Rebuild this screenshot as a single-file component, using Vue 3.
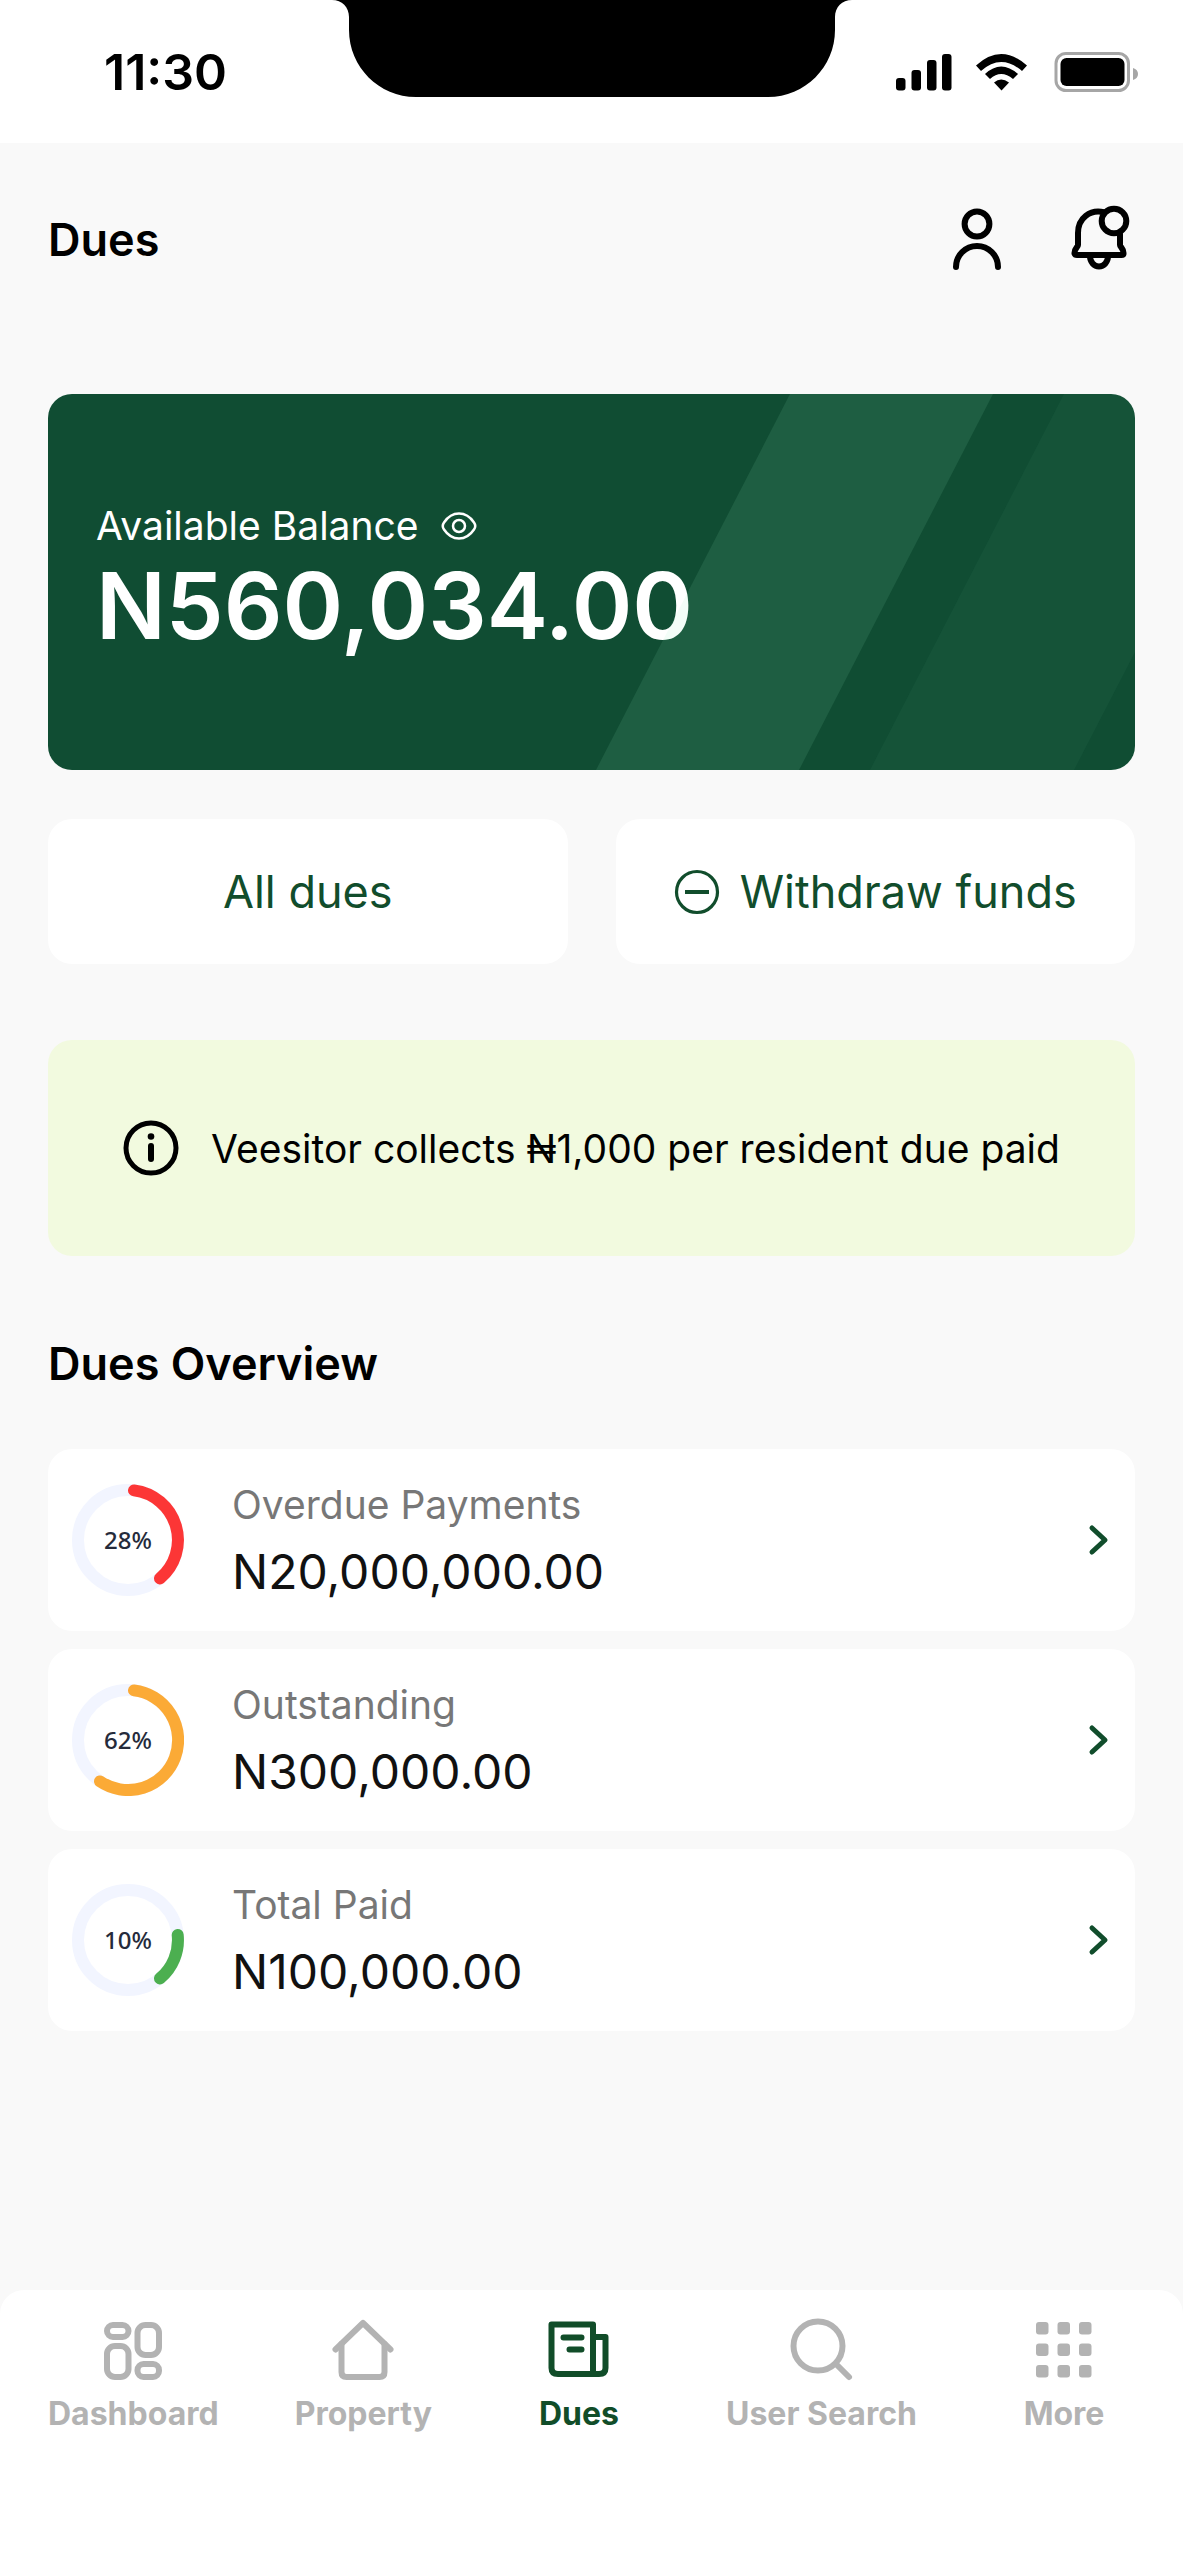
<script setup>
import { ref } from 'vue'

const showBalance = ref(true)
const active = ref('Dues')

const overview = [
  { label: 'Overdue Payments', amount: 'N20,000,000.00', pct: '28%', color: '#fc3636', arc: 'M62 6.4A50 50 0 0 1 88 94.4' },
  { label: 'Outstanding', amount: 'N300,000.00', pct: '62%', color: '#fbaa36', arc: 'M62 6.4A50 50 0 1 1 28 97.4' },
  { label: 'Total Paid', amount: 'N100,000.00', pct: '10%', color: '#4caf50', arc: 'M105.7 51A50 50 0 0 1 88 94.4' }
]

const tabs = ['Dashboard', 'Property', 'Dues', 'User Search', 'More']
const dots = [8, 29.5, 51]
</script>

<template>
  <div class="screen">
    <div class="status">
      <span class="time">11:30</span>
      <svg class="notch" width="520" height="98" viewBox="0 0 520 98" aria-hidden="true">
        <path d="M0 0H520C510 0 503 7 503 17V30C503 67 473 97 436 97H84C47 97 17 67 17 30V17C17 7 10 0 0 0Z" />
      </svg>
      <svg class="signals" width="244" height="42" viewBox="0 0 244 42" aria-hidden="true">
        <rect x="0" y="27" width="9.500" height="12.500" rx="3" />
        <rect x="15.500" y="19" width="9.500" height="20.500" rx="3" />
        <rect x="31" y="9" width="9.500" height="30.500" rx="3" />
        <rect x="46" y="3" width="9.500" height="36.500" rx="3" />
        <path d="M80 14.5Q105 -8.500 131 14.500L126 20Q105 2 85 20Z" />
        <path d="M89 23Q105 8 122 23L117 28Q105 18 94 28Z" />
        <path d="M98 31.500Q105 25.500 113 31.500L105.500 39.500Z" />
        <rect x="160" y="2.500" width="72.500" height="37" rx="10" fill="none" stroke="#a6a6a6" stroke-width="3" />
        <rect x="164.500" y="7" width="64" height="28" rx="6" />
        <path d="M237 17Q242 18.500 242 23T237 29Z" fill="#a6a6a6" />
      </svg>
    </div>

    <header class="header">
      <h1>Dues</h1>
      <div class="header-actions">
        <button type="button" aria-label="Profile">
          <svg width="72" height="72" viewBox="0 0 72 72" class="line">
            <circle cx="36" cy="20" r="12.400" />
            <path d="M15 63a21 21 0 0 1 42 0" />
          </svg>
        </button>
        <button type="button" aria-label="Notifications">
          <svg width="72" height="72" viewBox="0 0 72 72" class="line">
            <path d="M41 8.200C27 5 15 14 15 29V41C15 43 11 45 11.500 49.500Q12 51 14 51H58.500Q60.500 51 60.500 49.500C61 45 57 43 57 41V30" />
            <path d="M27 52a9 10.500 0 0 0 18 0" />
            <circle cx="51" cy="17" r="12.300" />
          </svg>
        </button>
      </div>
    </header>

    <main class="content">
      <section class="balance">
        <div class="balance-label">
          <span>Available Balance</span>
          <button type="button" aria-label="Toggle balance" @click="showBalance = !showBalance">
            <svg width="36" height="28" viewBox="0 0 36 28" fill="none" stroke="#fff" stroke-width="2.500">
              <path d="M3 10.500C11-1.500 25-1.500 33 10.500Q35.500 14 33 17.500C25 29.500 11 29.500 3 17.500Q.500 14 3 10.500Z" />
              <circle cx="18" cy="14" r="6" />
            </svg>
          </button>
        </div>
        <p class="balance-amount">{{ showBalance ? 'N560,034.00' : '••••••' }}</p>
        <svg class="stripes" viewBox="0 0 540 376" preserveAspectRatio="xMaxYMid slice" aria-hidden="true">
          <path d="M195 0H398L204 376H1Z" fill="rgba(150,235,190,.11)" />
          <path d="M469 0H540V258L479 376H275Z" fill="rgba(150,235,190,.045)" />
        </svg>
      </section>

      <div class="actions">
        <button type="button" class="action">All dues</button>
        <button type="button" class="action">
          <svg width="46" height="46" viewBox="0 0 46 46" fill="none" stroke="currentColor" stroke-width="3.200">
            <circle cx="23" cy="23" r="20.500" />
            <path d="M11 23H35" stroke-width="4" />
          </svg>
          <span>Withdraw funds</span>
        </button>
      </div>

      <p class="notice">
        <svg width="56" height="56" viewBox="0 0 56 56" aria-hidden="true">
          <circle cx="28" cy="28" r="25" fill="none" stroke="#000" stroke-width="5" />
          <circle cx="28" cy="16.500" r="3.300" />
          <path d="M28 26V39" stroke="#000" stroke-width="6" stroke-linecap="round" />
        </svg>
        <span>Veesitor collects ₦1,000 per resident due paid</span>
      </p>

      <h2>Dues Overview</h2>

      <ul class="list">
        <li v-for="item in overview" :key="item.label">
          <a href="#" class="row">
            <span class="ring">
              <svg width="112" height="112" viewBox="0 0 112 112" fill="none" stroke-width="12" aria-hidden="true">
                <circle cx="56" cy="56" r="50" stroke="#f2f5ff" />
                <path :d="item.arc" :stroke="item.color" stroke-linecap="round" />
              </svg>
              <span class="pct">{{ item.pct }}</span>
            </span>
            <span class="row-text">
              <span class="row-label">{{ item.label }}</span>
              <span class="row-amount">{{ item.amount }}</span>
            </span>
            <svg class="chevron" width="24" height="32" viewBox="0 0 24 32" aria-hidden="true">
              <path d="M5 4L18 16L5 28" />
            </svg>
          </a>
        </li>
      </ul>
    </main>

    <nav class="tabs">
      <a v-for="tab in tabs" :key="tab" href="#" class="tab" :class="{ active: tab === active }" @click.prevent="active = tab">
        <svg width="72" height="72" viewBox="0 0 72 72" class="line" aria-hidden="true">
          <template v-if="tab === 'Dashboard'">
            <rect x="10" y="11" width="21.500" height="12" rx="6" />
            <rect x="40.500" y="11" width="21.500" height="30" rx="8" />
            <rect x="10" y="32" width="21.500" height="31" rx="8" />
            <rect x="40.500" y="50" width="21.500" height="13" rx="6" />
          </template>
          <template v-else-if="tab === 'Property'">
            <path d="M8.500 35.500L36 9L63.500 35.500" />
            <path d="M14.500 30V58Q14.500 63 19.500 63H52.500Q57.500 63 57.500 58V30" />
          </template>
          <template v-else-if="tab === 'Dues'">
            <path d="M50 60H15Q8.500 60 8.500 54V10.500H50V60H56Q62.500 60 62.500 54V23H50" />
            <path d="M20.500 23.500H38.500M26.500 35.500H38.500" />
          </template>
          <template v-else-if="tab === 'User Search'">
            <circle cx="33" cy="32" r="24.500" />
            <path d="M51 50L64 63" />
          </template>
          <g v-else fill="currentColor" stroke="none">
            <template v-for="y in dots" :key="y">
              <rect v-for="x in dots" :key="x" :x="x" :y="y" width="12.500" height="12.500" rx="3" />
            </template>
          </g>
        </svg>
        <span>{{ tab }}</span>
      </a>
    </nav>
  </div>
</template>

<style>
body {
  margin: 0;
  background: #f9f9f9;
}
</style>

<style scoped>
.screen {
  display: flex;
  flex-direction: column;
  min-height: 100vh;
  background: #f9f9f9;
  color: #000;
  font-family: Inter, "Liberation Sans", sans-serif;
}

button {
  padding: 0;
  border: 0;
  background: none;
  color: inherit;
  font: inherit;
  cursor: pointer;
}

svg {
  display: block;
  flex: none;
}

.line {
  fill: none;
  stroke: currentColor;
  stroke-width: 6;
  stroke-linecap: round;
  stroke-linejoin: round;
}

.status {
  position: relative;
  display: flex;
  align-items: center;
  justify-content: space-between;
  box-sizing: border-box;
  height: 143px;
  padding: 0 43px 0 104px;
  background: #fff;
}

.time {
  font-size: 50px;
  font-weight: 600;
  line-height: 60px;
}

.notch {
  position: absolute;
  top: 0;
  left: 50%;
  transform: translateX(-50%);
}

.header {
  display: flex;
  align-items: center;
  justify-content: space-between;
  padding: 61px 48px 0;
}

h1,
h2 {
  margin: 0;
  font-size: 45px;
  font-weight: 600;
  line-height: 52px;
}

.header-actions {
  display: flex;
  gap: 50px;
}

.content {
  flex: 1;
  padding: 118px 48px 48px;
}

.balance {
  position: relative;
  display: flex;
  flex-direction: column;
  justify-content: center;
  box-sizing: border-box;
  height: 376px;
  padding: 0 48px;
  overflow: hidden;
  border-radius: 24px;
  background: #104d33;
  color: #fff;
}

.balance-label {
  display: flex;
  align-items: center;
  gap: 22px;
  font-size: 39px;
  line-height: 48px;
}

.balance-amount {
  margin: 0;
  font-size: 92px;
  font-weight: 600;
  line-height: 112px;
}

.stripes {
  position: absolute;
  top: 0;
  right: 0;
  height: 100%;
  pointer-events: none;
}

.actions {
  display: grid;
  grid-template-columns: 1fr 1fr;
  gap: 48px;
  margin-top: 49px;
}

.action {
  display: flex;
  align-items: center;
  justify-content: center;
  gap: 20px;
  height: 145px;
  border-radius: 24px;
  background: #fff;
  color: #114d2c;
  font-size: 45px;
}

.notice {
  display: flex;
  align-items: center;
  justify-content: center;
  gap: 32px;
  height: 216px;
  margin: 76px 0 0;
  border-radius: 24px;
  background: #f2fadf;
  font-size: 39px;
}

h2 {
  margin-top: 82px;
}

.list {
  display: flex;
  flex-direction: column;
  gap: 18px;
  margin: 59px 0 0;
  padding: 0;
  list-style: none;
}

.row {
  display: flex;
  align-items: center;
  height: 182px;
  padding: 0 24px;
  border-radius: 24px;
  background: #fff;
  color: #111;
  text-decoration: none;
}

.ring {
  display: grid;
  place-items: center;
}

.ring > * {
  grid-area: 1 / 1;
}

.pct {
  color: #252b3b;
  font-family: "Noto Sans", "Open Sans", sans-serif;
  font-size: 24px;
  font-weight: 500;
  line-height: 28px;
}

.row-text {
  display: flex;
  flex: 1;
  flex-direction: column;
  gap: 10px;
  margin-left: 48px;
}

.row-label {
  color: #777;
  font-size: 39px;
  line-height: 54px;
}

.row-amount {
  font-size: 48px;
  line-height: 60px;
}

.chevron {
  fill: none;
  stroke: #114d2c;
  stroke-width: 5;
  stroke-linecap: round;
  stroke-linejoin: round;
}

.tabs {
  display: flex;
  justify-content: space-between;
  padding: 24px 48px 126px;
  border-radius: 24px 24px 0 0;
  background: #fff;
}

.tab {
  display: flex;
  flex-direction: column;
  align-items: center;
  gap: 8px;
  color: #b3b3b3;
  font-size: 32px;
  font-weight: 700;
  line-height: 40px;
  text-decoration: none;
}

.tab:nth-child(odd) {
  min-width: 142px;
}

.tab.active {
  color: #114d29;
}
</style>
